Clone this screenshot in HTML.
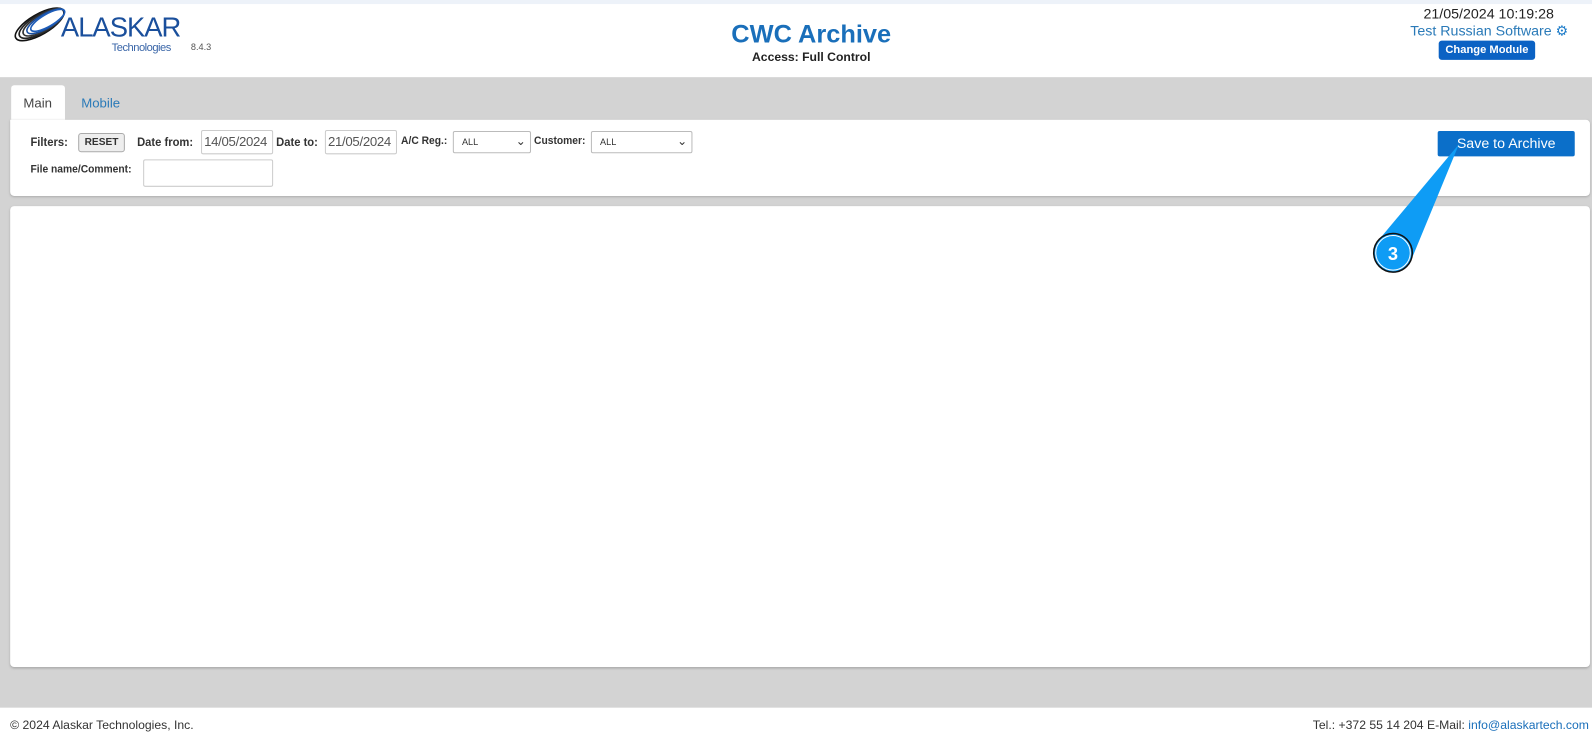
<!DOCTYPE html>
<html><head><style>
*{box-sizing:border-box;margin:0;padding:0}
body{width:1592px;height:734px;position:relative;background:#fff;font-family:"Liberation Sans",sans-serif;overflow:hidden}
#w{position:absolute;left:0;top:0;width:1568px;height:723px;transform:scale(1.01531);transform-origin:0 0}
.abs{position:absolute}
.lbl{position:absolute;font-size:12px;font-weight:bold;color:#333;transform:scaleX(.92);transform-origin:left}
.inp{position:absolute;border:1px solid #ccc;background:#fff;font-size:13px;color:#555;border-radius:2px;padding:3px 2px;letter-spacing:-.3px}
.sel{position:absolute;border:1px solid #bbb;background:#fff;font-size:9px;color:#333;border-radius:2px;padding:5px 8px}
</style></head><body><div id="w">
<div class="abs" style="left:0;top:0;width:1568px;height:4px;background:#edf2f9"></div>
<svg class="abs" style="left:12px;top:5px" width="60" height="38" viewBox="0 0 60 38">
<g fill="none" stroke-width="1.6">
<ellipse cx="27" cy="19" rx="27" ry="10" transform="rotate(-30 27 19)" stroke="#111"/>
<ellipse cx="29" cy="18" rx="25" ry="9" transform="rotate(-30 29 18)" stroke="#222"/>
<ellipse cx="31" cy="17" rx="23" ry="8" transform="rotate(-30 31 17)" stroke="#333"/>
<ellipse cx="33" cy="16" rx="21" ry="7" transform="rotate(-30 33 16)" stroke="#1a4fa0"/>
<ellipse cx="35" cy="15" rx="19" ry="6" transform="rotate(-30 35 15)" stroke="#1d5cb8"/>
</g></svg>
<div class="abs" style="left:60px;top:12px;font-size:27px;color:#1a4f9c;letter-spacing:-1px">ALASKAR</div>
<div class="abs" style="left:110px;top:41px;font-size:11px;color:#3a66a8;letter-spacing:-.5px">Technologies</div>
<div class="abs" style="left:188px;top:41px;font-size:9px;color:#555">8.4.3</div>
<div class="abs" style="left:0;width:1598px;top:20px;text-align:center;font-size:25px;font-weight:bold;color:#1a6fba">CWC Archive</div>
<div class="abs" style="left:0;width:1598px;top:49px;text-align:center;font-size:12px;font-weight:bold;color:#222">Access: Full Control</div>
<div class="abs" style="left:1402px;top:5px;font-size:14px;color:#222">21/05/2024 10:19:28</div>
<div class="abs" style="left:1389px;top:22px;font-size:14px;color:#2a7ab8">Test Russian Software <span style="color:#1a7ac8">&#9881;</span></div>
<div class="abs" style="left:1417px;top:40px;width:95px;height:19px;background:#0b62c4;border-radius:3px;color:#fff;font-size:11px;font-weight:bold;text-align:center;line-height:19px">Change Module</div>
<div class="abs" style="left:0;top:76px;width:1568px;height:621px;background:#d3d3d3"></div>
<div class="abs" style="left:11px;top:84px;width:53px;height:36px;background:#fff;border-radius:3px 3px 0 0;font-size:13px;color:#444;padding:10px 0 0 12px">Main</div>
<div class="abs" style="left:80px;top:94px;font-size:13px;color:#2a7ab8">Mobile</div>
<div class="abs" style="left:10px;top:118px;width:1556px;height:75px;background:#fff;border-radius:0 4px 4px 4px;box-shadow:0 1px 2px #aaa"></div>
<div class="lbl" style="left:30px;top:133px">Filters:</div>
<div class="abs" style="left:77px;top:131px;width:46px;height:19px;border:1px solid #aaa;border-radius:3px;background:#eee;font-size:10px;font-weight:bold;text-align:center;line-height:17px;color:#333">RESET</div>
<div class="lbl" style="left:135px;top:133px">Date from:</div>
<div class="inp" style="left:198px;top:128px;width:71px;height:24px">14/05/2024</div>
<div class="lbl" style="left:272px;top:133px">Date to:</div>
<div class="inp" style="left:320px;top:128px;width:71px;height:24px">21/05/2024</div>
<div class="lbl" style="left:395px;top:133px;font-size:11px">A/C Reg.:</div>
<div class="sel" style="left:446px;top:129px;width:77px;height:22px">ALL<span style="position:absolute;right:4px;top:2px;font-size:12px">&#8964;</span></div>
<div class="lbl" style="left:526px;top:133px;font-size:11px">Customer:</div>
<div class="sel" style="left:582px;top:129px;width:100px;height:22px">ALL<span style="position:absolute;right:4px;top:2px;font-size:12px">&#8964;</span></div>
<div class="lbl" style="left:30px;top:161px;font-size:11px">File name/Comment:</div>
<div class="inp" style="left:141px;top:157px;width:128px;height:27px"></div>
<div class="abs" style="left:1416px;top:129px;width:135px;height:25px;background:#0b6fc9;border-radius:2px;color:#fff;font-size:14px;text-align:center;line-height:25px">Save to Archive</div>
<div class="abs" style="left:10px;top:203px;width:1556px;height:454px;background:#fff;border-radius:4px;box-shadow:0 1px 2px #aaa"></div>
<svg class="abs" style="left:0;top:0" width="1568" height="723">
<polygon points="1437,142 1354,241 1390,256" fill="#0e9cf5"/>
<circle cx="1372" cy="249" r="19" fill="#0e9cf5" stroke="#111" stroke-width="1.5"/>
<circle cx="1372" cy="249" r="17" fill="none" stroke="#fff" stroke-width="1"/>
<text x="1372" y="256" text-anchor="middle" font-family="Liberation Sans" font-weight="bold" font-size="18" fill="#fff">3</text>
</svg>
<div class="abs" style="left:10px;top:707px;font-size:12px;color:#333">© 2024 Alaskar Technologies, Inc.</div>
<div class="abs" style="right:3px;top:707px;font-size:12px;color:#333">Tel.: +372 55 14 204 E-Mail: <span style="color:#1a6fba">info@alaskartech.com</span></div>
</div></body></html>
